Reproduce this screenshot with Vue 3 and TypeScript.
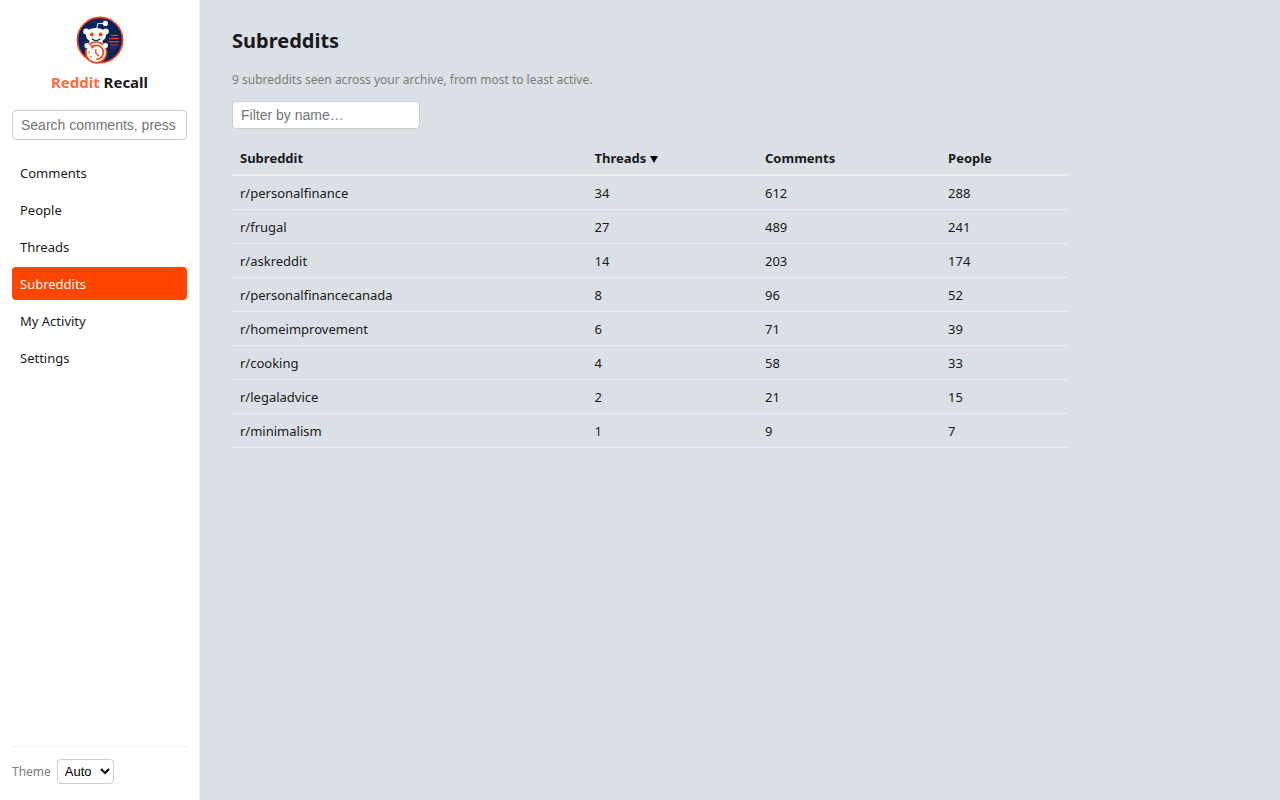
<script setup lang="ts">
import { computed, ref } from 'vue'

interface Subreddit {
  name: string
  threads: number
  comments: number
  people: number
}
type SortKey = keyof Subreddit

const links = ['Comments', 'People', 'Threads', 'Subreddits', 'My Activity', 'Settings']
const active = ref('Subreddits')
const search = ref('')
const filter = ref('')
const theme = ref('Auto')
const sortKey = ref<SortKey>('threads')

const columns: { key: SortKey; label: string }[] = [
  { key: 'name', label: 'Subreddit' },
  { key: 'threads', label: 'Threads' },
  { key: 'comments', label: 'Comments' },
  { key: 'people', label: 'People' },
]

const subreddits: Subreddit[] = [
  { name: 'personalfinance', threads: 34, comments: 612, people: 288 },
  { name: 'frugal', threads: 27, comments: 489, people: 241 },
  { name: 'askreddit', threads: 14, comments: 203, people: 174 },
  { name: 'personalfinancecanada', threads: 8, comments: 96, people: 52 },
  { name: 'homeimprovement', threads: 6, comments: 71, people: 39 },
  { name: 'cooking', threads: 4, comments: 58, people: 33 },
  { name: 'legaladvice', threads: 2, comments: 21, people: 15 },
  { name: 'minimalism', threads: 1, comments: 9, people: 7 },
]

const rows = computed(() => {
  const key = sortKey.value
  return subreddits
    .filter((s) => s.name.includes(filter.value.trim().toLowerCase()))
    .sort((a, b) => (key === 'name' ? b.name.localeCompare(a.name) : b[key] - a[key]))
})
</script>

<template>
  <div class="layout">
    <aside class="sidebar">
      <div class="brand">
        <svg class="logo" viewBox="0 0 48 48" aria-hidden="true">
          <circle cx="24" cy="24" r="22.6" fill="#06245c" stroke="#f0431c" stroke-width="1.7" />
          <path d="M20.8 12.5 L21.8 7.6 L27.5 7.6" fill="none" stroke="#fff" stroke-width="1" />
          <circle cx="29.4" cy="7.4" r="2.6" fill="#fff" />
          <circle cx="10.2" cy="15.6" r="3" fill="#fff" />
          <circle cx="29.8" cy="15.6" r="3" fill="#fff" />
          <path d="M14 24 h12 l2 6 h-16 z" fill="#fff" />
          <path d="M20 12 C26 12 30.5 15 30 19.5 C29.6 24 25.5 26 20 26 C14.5 26 10.4 24 10 19.5 C9.5 15 14 12 20 12 Z" fill="#fff" />
          <circle cx="15.8" cy="18.6" r="2" fill="#f0431c" />
          <circle cx="24.6" cy="18.6" r="2" fill="#f0431c" />
          <path d="M15.8 22.8 Q20 26.2 24.4 22.8" fill="none" stroke="#06245c" stroke-width="1.2" />
          <circle cx="20.2" cy="36.4" r="10.4" fill="#fff" stroke="#f0431c" stroke-width="1.7" />
          <circle cx="11" cy="29.6" r="2.6" fill="#fff" />
          <circle cx="29.4" cy="29.6" r="2.6" fill="#fff" />
          <path d="M15.6 31.2 A7 7 0 1 1 20.2 43.3" fill="none" stroke="#f0431c" stroke-width="1.6" />
          <path d="M14 29.2 L19 29.4 L16.4 33 Z" fill="#f0431c" />
          <path d="M13.2 35.5 v1.8 M14.4 40 l1 1.5" stroke="#f0431c" stroke-width="1.2" />
          <path d="M19.8 33 v4.2 l3.2 3" fill="none" stroke="#f0431c" stroke-width="1.3" />
          <g stroke="#f0431c" stroke-width="1.3">
            <path d="M35 19.4 H42" />
            <path d="M33 22.6 H42.5" />
            <path d="M32.5 25.8 H43" />
            <path d="M34 28.9 H42" opacity=".7" />
            <path d="M34 32 H40" opacity=".4" />
            <path d="M33.5 35 H37.5" opacity=".2" />
          </g>
        </svg>
        <div class="brand-name"><span class="accent">Reddit</span> Recall</div>
      </div>

      <input
        v-model="search"
        class="field"
        type="text"
        aria-label="Search comments"
        placeholder="Search comments, press Enter"
      />

      <nav class="nav">
        <a
          v-for="link in links"
          :key="link"
          href="#"
          class="nav-link"
          :class="{ active: link === active }"
          @click.prevent="active = link"
        >{{ link }}</a>
      </nav>

      <div class="theme">
        <label for="theme">Theme</label>
        <select id="theme" v-model="theme">
          <option>Auto</option>
          <option>Light</option>
          <option>Dark</option>
        </select>
      </div>
    </aside>

    <main class="main">
      <h1>Subreddits</h1>
      <p class="summary">9 subreddits seen across your archive, from most to least active.</p>
      <input
        v-model="filter"
        class="field filter"
        type="text"
        aria-label="Filter by name"
        placeholder="Filter by name…"
      />
      <table>
        <colgroup>
          <col class="col-name" />
          <col class="col-threads" />
          <col class="col-comments" />
          <col />
        </colgroup>
        <thead>
          <tr>
            <th v-for="col in columns" :key="col.key" scope="col">
              <button type="button" @click="sortKey = col.key">
                {{ col.label }}<svg v-if="sortKey === col.key" class="arrow" viewBox="0 0 8 8" aria-hidden="true"><path d="M0 1 H8 L4 8 Z" /></svg>
              </button>
            </th>
          </tr>
        </thead>
        <tbody>
          <tr v-for="row in rows" :key="row.name">
            <td><a href="#" @click.prevent>r/{{ row.name }}</a></td>
            <td>{{ row.threads }}</td>
            <td>{{ row.comments }}</td>
            <td>{{ row.people }}</td>
          </tr>
        </tbody>
      </table>
    </main>
  </div>
</template>

<style>
body {
  margin: 0;
  background: #dae0e6;
}
</style>

<style scoped>
* {
  box-sizing: border-box;
}
.layout {
  display: flex;
  min-height: 100vh;
  color: #1a1a1b;
  font-family: 'Segoe UI', 'Noto Sans', 'Open Sans', sans-serif;
  font-size: 13px;
  line-height: 19px;
}
.sidebar {
  display: flex;
  flex-direction: column;
  flex: none;
  width: 200px;
  padding: 16px 12px;
  background: #fff;
  border-right: 1px solid #edeff1;
}
.brand {
  display: flex;
  flex-direction: column;
  align-items: center;
  gap: 8px;
  margin-bottom: 18px;
}
.logo {
  width: 48px;
  height: 48px;
}
.brand-name {
  font-size: 15px;
  font-weight: 700;
  line-height: 20px;
}
.accent {
  color: #ff6b3d;
}
.field {
  width: 100%;
  height: 30px;
  padding: 0 8px;
  border: 1px solid #ccc;
  border-radius: 4px;
  background: #fff;
  color: #1a1a1b;
  font-family: 'Liberation Sans', Arial, sans-serif;
  font-size: 14px;
}
.field::placeholder {
  color: #757575;
}
.nav {
  display: flex;
  flex-direction: column;
  gap: 4px;
  margin-top: 16px;
}
.nav-link {
  padding: 8px 8px 6px;
  border-radius: 4px;
  color: inherit;
  text-decoration: none;
}
.nav-link.active {
  background: #ff4500;
  color: #fff;
}
.theme {
  display: flex;
  align-items: center;
  gap: 6px;
  margin-top: auto;
  padding-top: 12px;
  border-top: 1px solid #edeff1;
  color: #7c7c7c;
  font-size: 12px;
}
.theme select {
  height: 25px;
  padding: 0 3px;
  border: 1px solid #ccc;
  border-radius: 4px;
  background: #fff;
  color: #000;
  font-family: 'Liberation Sans', Arial, sans-serif;
  font-size: 13px;
}
.main {
  flex: 1;
  min-width: 0;
  max-width: 900px;
  padding: 24px 32px;
}
h1 {
  margin: 0 0 12px;
  font-size: 20px;
  font-weight: 700;
  line-height: 34px;
}
.summary {
  margin: 0 0 12px;
  color: #7c7c7c;
  font-size: 12px;
  line-height: 19px;
}
.filter {
  display: block;
  width: 188px;
  height: 28px;
  margin-bottom: 12px;
}
table {
  width: 100%;
  table-layout: fixed;
  border-spacing: 0;
}
.col-name {
  width: 42.4%;
}
.col-threads {
  width: 20.4%;
}
.col-comments {
  width: 21.9%;
}
th,
td {
  padding: 8px 8px 6px;
  border-bottom: 1px solid #edeff1;
  text-align: left;
}
th {
  border-bottom-width: 2px;
}
th button {
  display: block;
  padding: 0;
  border: 0;
  background: none;
  color: inherit;
  font: inherit;
  font-weight: 700;
  cursor: pointer;
}
.arrow {
  width: 8px;
  height: 8px;
  margin-left: 4px;
}
td a {
  color: inherit;
  text-decoration: none;
}
</style>
